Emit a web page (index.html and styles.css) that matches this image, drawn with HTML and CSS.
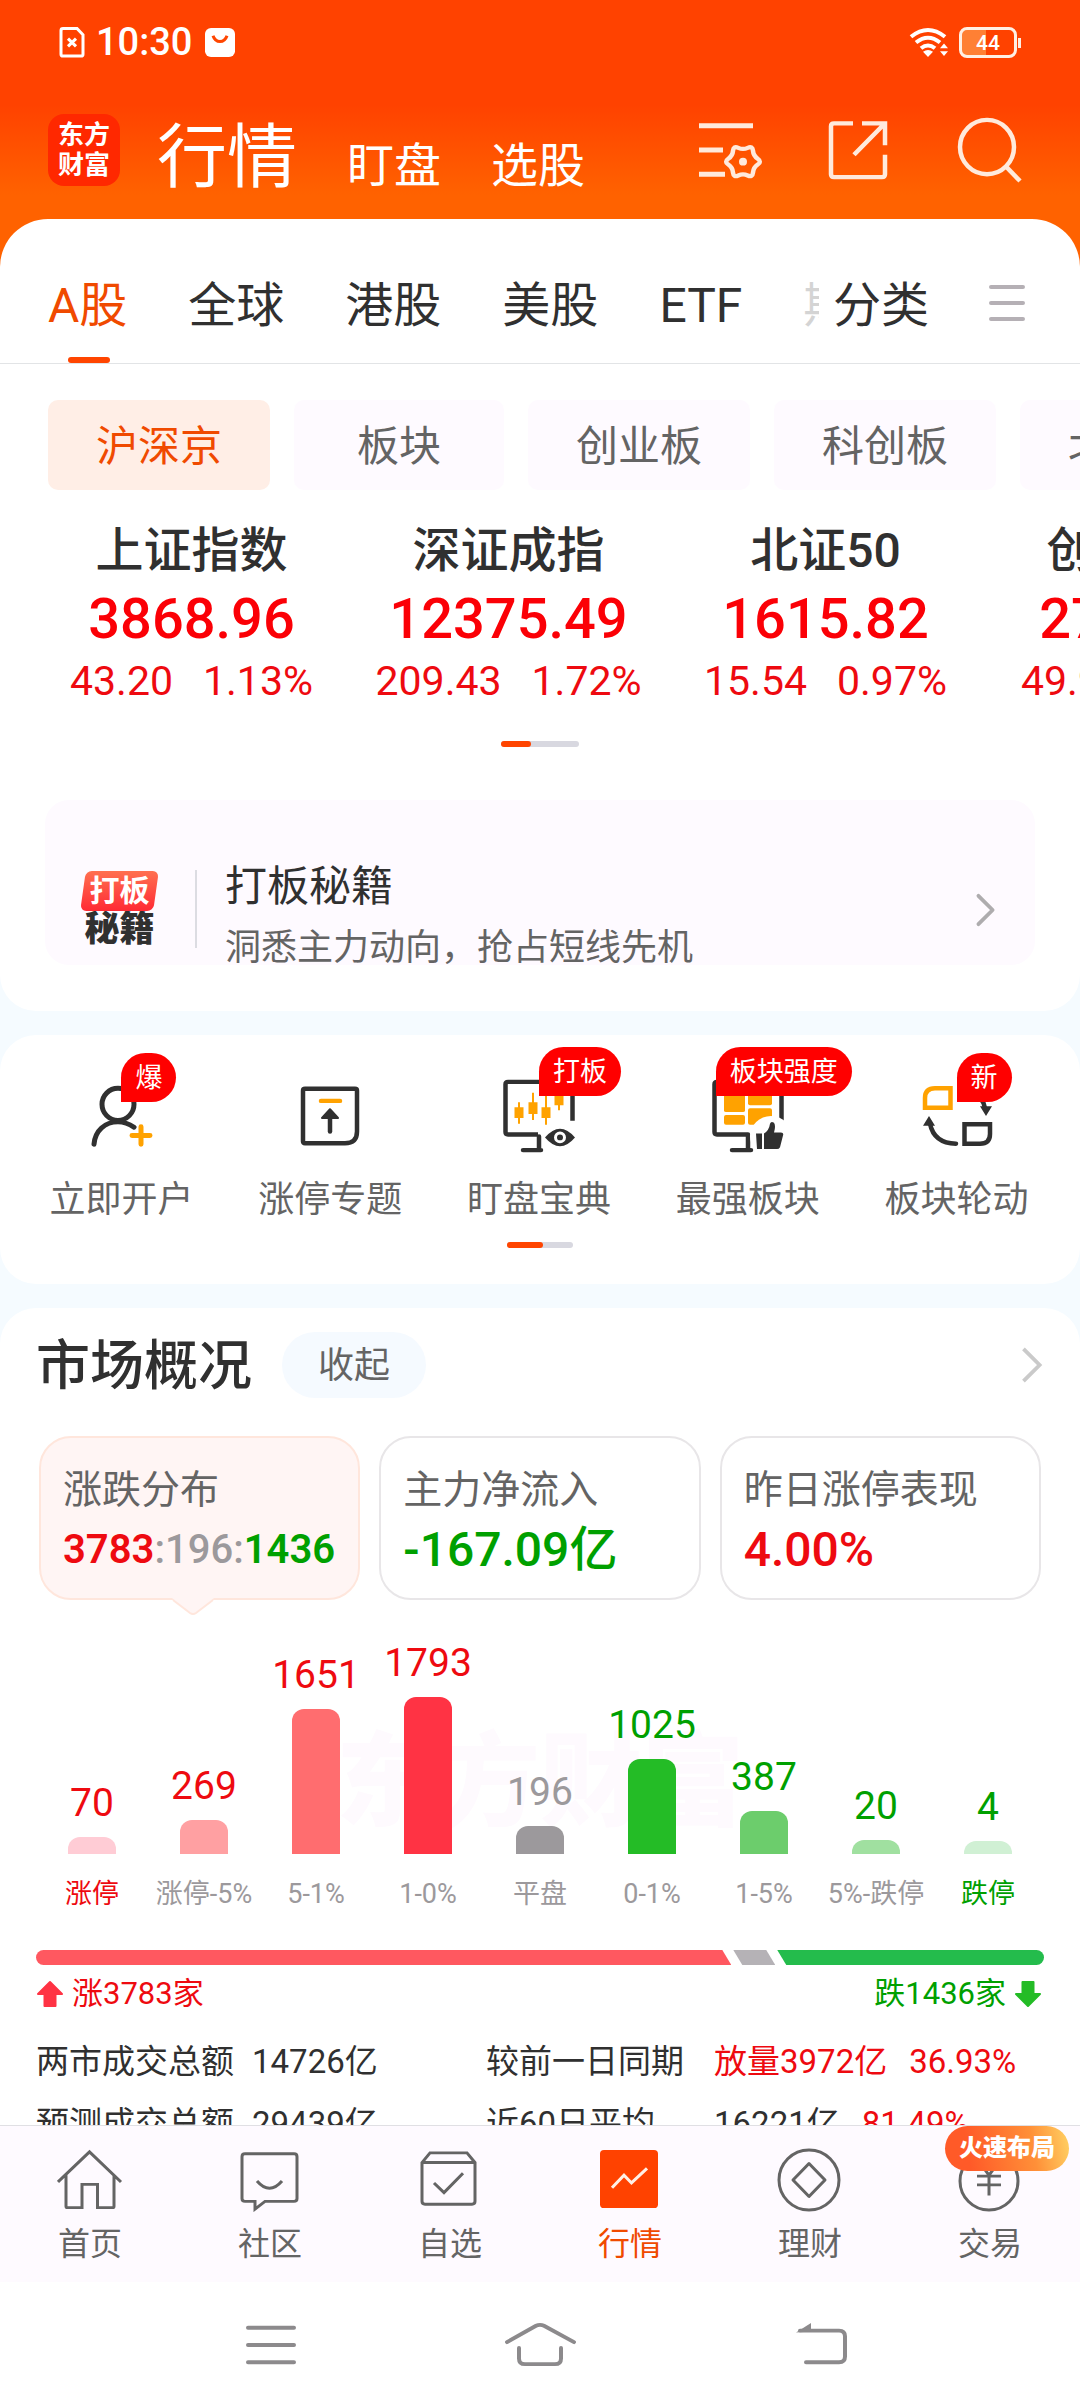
FILE: index.html
```html
<!DOCTYPE html>
<html lang="zh-CN">
<head>
<meta charset="utf-8">
<meta name="viewport" content="width=device-width, initial-scale=1">
<title>行情</title>
<link rel="stylesheet" href="styles.css">
</head>
<body>
<header class="top">
  <div class="status">
    <svg width="26" height="31" viewBox="0 0 26 32" preserveAspectRatio="none" fill="none" stroke="#fff" stroke-width="3"><path d="M4 1.500H18L24 8V28q0 2-2 2H4q-2 0-2-2V3.500q0-2 2-2z"/><path d="M9 12l8 8M17 12l-8 8"/></svg>
    <time class="clock">10:30</time>
    <svg width="30" height="31" viewBox="0 0 30 32" preserveAspectRatio="none"><rect y="1" width="30" height="30" rx="6" fill="#fff"/><path d="M8 9q2 6 7 6t7-6" fill="none" stroke="#ff4500" stroke-width="3"/></svg>
    <span class="spacer"></span>
    <svg width="40" height="31" viewBox="0 0 40 32" preserveAspectRatio="none" fill="none" stroke="#fff" stroke-width="4"><path d="M2 10Q19-4 36 10M7 16Q19 6 31 16M12 22Q19 16 26 22"/><path d="M14 25.500Q19 22 24 25.500L19 31z" fill="#fff" stroke="none"/><path d="M31 22l4-5 4 5zM31 25l4 5 4-5z" fill="#fff" stroke="none"/></svg>
    <span class="battery">44</span>
  </div>
  <div class="bar">
    <a class="logo" href="#">东方<br>财富</a>
    <nav class="modes">
      <a class="mode mode-on" href="#">行情</a>
      <a class="mode" href="#">盯盘</a>
      <a class="mode" href="#">选股</a>
    </nav>
    <div class="tools">
      <button type="button" aria-label="设置"><svg width="66" height="66" viewBox="0 0 66 68" preserveAspectRatio="none" fill="none" stroke="#ffeadc" stroke-width="5"><path d="M0 9H54M0 34H24M0 59H26"/><path stroke-width="4.500" d="M58.700 43Q63 46 58.700 49Q54.400 52 54 57.200Q53.500 62.500 48.700 60.200Q44 58 39.300 60.200Q34.500 62.500 34 57.200Q33.600 52 29.300 49Q25 46 29.300 43Q33.600 40 34 34.800Q34.500 29.500 39.300 31.800Q44 34 48.700 31.800Q53.500 29.500 54 34.800Q54.400 40 58.700 43z"/><circle cx="44" cy="46" r="4" fill="#ffeadc" stroke="none"/></svg></button>
      <button type="button" aria-label="分享"><svg width="66" height="66" viewBox="0 0 66 68" preserveAspectRatio="none" fill="none" stroke="#ffeadc" stroke-width="4.500"><path d="M25 6.500H6q-3 0-3 3V59q0 3 3 3H54q3 0 3-3V39M34 6.500H57V29M57 6.500L26 39"/></svg></button>
      <button type="button" aria-label="搜索"><svg width="66" height="66" viewBox="0 0 66 68" preserveAspectRatio="none" fill="none" stroke="#ffeadc" stroke-width="4.500"><ellipse cx="30" cy="31" rx="27" ry="28"/><path d="M48 50L63 66"/></svg></button>
    </div>
  </div>
</header>

<main class="main">
  <section class="sheet">
    <div class="tabs">
      <nav class="tab-list">
        <a class="tab tab-on" href="#">A股</a>
        <a class="tab" href="#">全球</a>
        <a class="tab" href="#">港股</a>
        <a class="tab" href="#">美股</a>
        <a class="tab" href="#">ETF</a>
        <a class="tab tab-fade" href="#">期</a>
      </nav>
      <a class="tab" href="#">分类</a>
      <button class="tab-menu" type="button" aria-label="菜单"><svg width="36" height="38" viewBox="0 0 36 38" stroke="#b5b0b5" stroke-width="4" stroke-linecap="round"><path d="M2 3H34M2 19H34M2 35H34"/></svg></button>
    </div>
    <nav class="chips">
      <a class="chip chip-on" href="#">沪深京</a>
      <a class="chip" href="#">板块</a>
      <a class="chip" href="#">创业板</a>
      <a class="chip" href="#">科创板</a>
      <a class="chip" href="#">北交所</a>
    </nav>
    <div class="indices">
      <a class="index" href="#"><span class="index-name">上证指数</span><span class="index-value">3868.96</span><span class="index-change"><span>43.20</span><span>1.13%</span></span></a>
      <a class="index" href="#"><span class="index-name">深证成指</span><span class="index-value">12375.49</span><span class="index-change"><span>209.43</span><span>1.72%</span></span></a>
      <a class="index" href="#"><span class="index-name">北证50</span><span class="index-value">1615.82</span><span class="index-change"><span>15.54</span><span>0.97%</span></span></a>
      <a class="index" href="#"><span class="index-name">创业板指</span><span class="index-value">2774.30</span><span class="index-change"><span>49.90</span><span>1.83%</span></span></a>
    </div>
    <div class="pager pager-wide"><span></span></div>
    <a class="promo" href="#">
      <span class="promo-logo"><span class="promo-tag">打板</span><span class="promo-word">秘籍</span></span>
      <span class="promo-text"><span class="promo-title">打板秘籍</span><span class="promo-sub">洞悉主力动向，抢占短线先机</span></span>
      <svg width="22" height="36" viewBox="0 0 22 38" fill="none" stroke="#aeacae" stroke-width="4" stroke-linecap="round" stroke-linejoin="round"><path d="M3 4L18 19L3 34"/></svg>
    </a>
  </section>

  <section class="card quick">
    <nav class="quick-list">
      <a class="quick-item" href="#">
        <span class="quick-icon"><svg width="72" height="74" viewBox="0 0 72 76" preserveAspectRatio="none" fill="none" stroke="#303030" stroke-width="5" stroke-linecap="round"><ellipse cx="33" cy="26" rx="16" ry="16.500"/><path d="M9 67C10 53 20 44 33 44C39 44 44 46 49 49.500"/><path stroke="#ffa200" d="M47 58H65M56 49V67"/></svg><span class="badge badge-low">爆</span></span>
        立即开户
      </a>
      <a class="quick-item" href="#">
        <span class="quick-icon"><svg width="72" height="74" viewBox="0 0 72 76" preserveAspectRatio="none" fill="none" stroke="#303030" stroke-width="4.500" stroke-linecap="round"><path d="M11 10H61q2 0 2 2V54q0 12-12 12H11q-2 0-2-2V12q0-2 2-2z"/><path stroke="#ffa200" d="M27 22.500H46"/><path d="M36 38V54"/><path fill="#303030" stroke-width="2" stroke-linejoin="round" d="M36 31L44 40H28z"/></svg></span>
        涨停专题
      </a>
      <a class="quick-item" href="#">
        <span class="quick-icon"><svg width="72" height="74" viewBox="0 0 72 76" preserveAspectRatio="none" fill="none" stroke="#303030" stroke-width="4.500" stroke-linecap="round"><path stroke-linecap="butt" d="M35 57H5q-2.500 0-2.500-2.500V5.500Q2.500 3 5 3H67q2.500 0 2.500 2.500V43"/><path d="M36 59V72M20 73H38"/><g stroke="#ffa200" stroke-width="2" stroke-linecap="butt"><path d="M16 24V46M30 14V42M43 14V47M56 8V32"/><path stroke-width="9" d="M16 29V40M30 24V36M43 29V40M56 14V27"/></g><path fill="#303030" stroke="none" d="M42 60Q57 42 72 60Q57 78 42 60z"/><circle cx="57" cy="60" r="4.500" stroke="#fff" stroke-width="3"/></svg><span class="badge">打板</span></span>
        盯盘宝典
      </a>
      <a class="quick-item" href="#">
        <span class="quick-icon"><svg width="72" height="74" viewBox="0 0 72 76" preserveAspectRatio="none" fill="none" stroke="#303030" stroke-width="4.500" stroke-linecap="round"><path d="M36 57H5q-2.500 0-2.500-2.500V5.500Q2.500 3 5 3H67q2.500 0 2.500 2.500V42M36 59V72M20 73H39"/><g fill="#ffa200" stroke="none"><rect x="12" y="12" width="21" height="22" rx="2"/><rect x="12" y="37" width="21" height="10" rx="2"/><rect x="36" y="12" width="24" height="15" rx="2"/><rect x="36" y="30" width="24" height="17" rx="2"/></g><circle cx="59" cy="59" r="21" fill="#fff" stroke="none"/><path fill="#303030" stroke="none" d="M44 56h6v16h-5zM52 56Q57 53 58 46Q59 43 62 45Q64 48 62 55H69Q72 55 71 58L68 70Q67 72 65 72H52z"/></svg><span class="badge badge-wide">板块强度</span></span>
        最强板块
      </a>
      <a class="quick-item" href="#">
        <span class="quick-icon"><svg width="72" height="74" viewBox="0 0 72 76" preserveAspectRatio="none" fill="none" stroke="#303030" stroke-width="4.500"><path stroke="#ffa200" d="M14 9.500H29.500V29.500H4V19.500Q4 9.500 14 9.500z"/><path d="M43.500 46.500H69V56.500Q69 66.500 59 66.500H43.500z"/><path stroke-linecap="round" d="M9 46Q13 66 35 66.500"/><path fill="#303030" stroke="none" d="M8 38L14 48H2zM65 38L71 28H59z"/><path d="M64 30Q62 18 50 12"/></svg><span class="badge badge-low">新</span></span>
        板块轮动
      </a>
    </nav>
    <div class="pager"><span></span></div>
  </section>

  <section class="card market">
    <div class="market-head">
      <h2>市场概况</h2>
      <button class="fold" type="button">收起</button>
      <a class="more" href="#" aria-label="更多"><svg width="24" height="38" viewBox="0 0 24 40" fill="none" stroke="#cacaca" stroke-width="4"><path d="M3 3L20 20L3 37"/></svg></a>
    </div>
    <div class="stats">
      <button class="stat stat-on" type="button">
        <span class="stat-name">涨跌分布</span>
        <span class="stat-value stat-mix"><b class="up">3783</b><span class="flat">:196:</span><b class="down">1436</b></span>
        <svg class="pointer" width="42" height="18" viewBox="0 0 42 18"><path d="M0 0H42L24 15Q21 17 18 15z" fill="#fff5f4"/><path d="M1 2L18 15Q21 17 24 15L41 2" fill="none" stroke="#ffe6dc" stroke-width="2"/></svg>
      </button>
      <button class="stat" type="button"><span class="stat-name">主力净流入</span><span class="stat-value down">-167.09亿</span></button>
      <button class="stat" type="button"><span class="stat-name">昨日涨停表现</span><span class="stat-value up">4.00%</span></button>
    </div>
    <div class="chart">
      <span class="watermark">东方财富</span>
      <ul class="bars">
        <li class="up"><span>70</span><i class="b1" style="height:17px"></i></li>
        <li class="up"><span>269</span><i class="b2" style="height:34px"></i></li>
        <li class="up"><span>1651</span><i class="b3" style="height:145px"></i></li>
        <li class="up"><span>1793</span><i class="b4" style="height:157px"></i></li>
        <li class="flat"><span>196</span><i class="b5" style="height:28px"></i></li>
        <li class="down"><span>1025</span><i class="b6" style="height:95px"></i></li>
        <li class="down"><span>387</span><i class="b7" style="height:43px"></i></li>
        <li class="down"><span>20</span><i class="b8" style="height:14px"></i></li>
        <li class="down"><span>4</span><i class="b9" style="height:13px"></i></li>
      </ul>
      <ul class="ranges">
        <li class="up">涨停</li><li>涨停-5%</li><li>5-1%</li><li>1-0%</li><li>平盘</li><li>0-1%</li><li>1-5%</li><li>5%-跌停</li><li class="down">跌停</li>
      </ul>
    </div>
    <div class="ratio"><i class="ratio-up" style="flex-grow:696"></i><i class="ratio-flat" style="flex-grow:42"></i><i class="ratio-down" style="flex-grow:267"></i></div>
    <div class="totals">
      <span class="total up"><svg width="28" height="28" viewBox="0 0 28 28"><path fill="#ff3344" stroke="#ff3344" stroke-width="2" stroke-linejoin="round" d="M14 2L26 14H19.500V26H8.500V14H2z"/></svg>涨3783家</span>
      <span class="total down">跌1436家<svg width="28" height="28" viewBox="0 0 28 28"><path fill="#24bc26" stroke="#24bc26" stroke-width="2" stroke-linejoin="round" d="M14 26L26 14H19.500V2H8.500V14H2z"/></svg></span>
    </div>
    <table class="figures">
      <tr><th scope="row">两市成交总额</th><td>14726亿</td><th scope="row">较前一日同期</th><td><span class="pair"><span class="up">放量3972亿</span><span class="up">36.93%</span></span></td></tr>
      <tr><th scope="row">预测成交总额</th><td>29439亿</td><th scope="row">近60日平均</th><td><span class="pair"><span>16221亿</span><span class="up">81.49%</span></span></td></tr>
    </table>
  </section>
</main>

<nav class="dock">
  <a class="dock-item" href="#"><svg width="66" height="64" viewBox="0 0 66 66" preserveAspectRatio="none" fill="none" stroke="#646464" stroke-width="3"><path d="M1 35L32.500 4L64 35M9 28V60q0 1.500 1.500 1.500H25V37.500H40.500V61.500H55.500q1.500 0 1.500-1.500V28"/></svg>首页</a>
  <a class="dock-item" href="#"><svg width="66" height="64" viewBox="0 0 66 66" preserveAspectRatio="none" fill="none" stroke="#646464" stroke-width="3"><path d="M8 6H57q3 0 3 3V52q0 3-3 3H28L18 63V55H8q-3 0-3-3V9q0-3 3-3z"/><path d="M20 34Q32.500 49 45 34"/></svg>社区</a>
  <a class="dock-item" href="#"><svg width="66" height="64" viewBox="0 0 66 66" preserveAspectRatio="none" fill="none" stroke="#646464" stroke-width="3"><path d="M5 15L13 5H50L58 15V55q0 3-3 3H8q-3 0-3-3zM5 15H58M17 36L27 46L46 26"/></svg>自选</a>
  <a class="dock-item dock-on" href="#"><svg width="66" height="64" viewBox="0 0 66 66" preserveAspectRatio="none" fill="none"><rect x="3" y="2" width="58" height="60" rx="4" fill="#ff4200"/><path d="M15 41L27 28L34.500 36L50 21" stroke="#fff0e6" stroke-width="3"/></svg>行情</a>
  <a class="dock-item" href="#"><svg width="66" height="64" viewBox="0 0 66 66" preserveAspectRatio="none" fill="none" stroke="#646464" stroke-width="3"><ellipse cx="32" cy="33" rx="30" ry="31"/><path stroke-linejoin="round" d="M32 16L48 33L32 50L16 33z"/></svg>理财</a>
  <a class="dock-item" href="#"><svg width="66" height="64" viewBox="0 0 66 66" preserveAspectRatio="none" fill="none" stroke="#646464" stroke-width="3"><ellipse cx="32" cy="34" rx="29" ry="30"/><path d="M22 14L32 28L42 14M20 29H44M20 38H44M32 28V49"/></svg>交易<span class="dock-badge">火速布局</span></a>
</nav>

<div class="system">
  <button type="button" aria-label="最近任务"><svg width="80" height="48" viewBox="0 0 80 50" preserveAspectRatio="none" stroke="#8c8a8c" stroke-width="4" stroke-linecap="round"><path d="M17 7H63M17 25H63M17 43H63"/></svg></button>
  <button type="button" aria-label="主屏幕"><svg width="80" height="48" viewBox="0 0 80 50" preserveAspectRatio="none" fill="none" stroke="#8c8a8c" stroke-width="4" stroke-linecap="round"><path d="M7 22L36 5Q40 3 44 5L74 22M19 28V39q0 6 6 6H55q6 0 6-6V28"/></svg></button>
  <button type="button" aria-label="返回"><svg width="80" height="48" viewBox="0 0 80 50" preserveAspectRatio="none" fill="none" stroke="#8c8a8c" stroke-width="4" stroke-linecap="round"><path d="M31 10H70q6 0 6 6V37q0 6-6 6H37"/><path d="M27 12L42 2V11z" fill="#8c8a8c" stroke="none"/></svg></button>
</div>
</body>
</html>
```
FILE: styles.css
```css
* { box-sizing: border-box; }

body {
  margin: 0;
  height: 100vh;
  display: flex;
  flex-direction: column;
  overflow: hidden;
  background: #f5fbff;
  color: #303030;
  font-family: Roboto, "Noto Sans CJK SC", sans-serif;
}

a { color: inherit; text-decoration: none; }
button { margin: 0; padding: 0; border: 0; background: none; font: inherit; color: inherit; }
svg { display: block; flex: none; }
ul { margin: 0; padding: 0; list-style: none; }
i { display: block; }

.up { color: #ee0a10; }
.down { color: #00a000; }
.flat { color: #9c999c; }

/* header */
.top {
  flex: none;
  padding-bottom: 50px;
  background: linear-gradient(#ff4200 105px, #ff6200 195px);
  color: #fff;
}
.status {
  display: flex;
  align-items: center;
  height: 84px;
  padding: 0 63px 0 59px;
}
.clock { margin: 0 13px 0 11px; font-size: 38px; font-weight: 500; line-height: 48px; }
.spacer { flex: 1; }
.battery {
  position: relative;
  width: 58px;
  height: 31px;
  margin-left: 10px;
  border: 3px solid #fff0e4;
  border-radius: 8px;
  background: linear-gradient(90deg, #ff8034 24px, transparent 24px);
  font-size: 21px;
  font-weight: 500;
  line-height: 26px;
  text-align: center;
}
.battery::after {
  content: "";
  position: absolute;
  top: 8px;
  right: -7px;
  width: 3px;
  height: 10px;
  background: #fff0e4;
}
.bar {
  display: flex;
  align-items: center;
  height: 135px;
  padding: 0 57px 3px 48px;
}
.logo {
  width: 72px;
  height: 72px;
  padding-top: 6px;
  border-radius: 16px;
  background: #ff2800;
  font-size: 26px;
  font-weight: 700;
  line-height: 30px;
  text-align: center;
}
.modes { display: flex; align-items: baseline; gap: 50px; margin-left: 37px; padding-top: 24px; }
.mode { font-size: 47px; line-height: 88px; }
.mode-on { font-size: 70px; }
.tools { display: flex; gap: 63px; margin-left: auto; }

/* sheet */
.main {
  flex: 1;
  min-height: 0;
  margin-top: -50px;
  overflow: hidden;
}
.sheet { padding-bottom: 46px; border-radius: 48px 48px 36px 36px; background: #fff; }
.tabs {
  display: flex;
  height: 145px;
  padding: 0 55px 0 48px;
  border-bottom: 1px solid #e2e4e6;
}
.tab-list { display: flex; flex: 1; gap: 61px; min-width: 0; margin-right: 14px; overflow: hidden; }
.tab { position: relative; flex: none; font-size: 48px; line-height: 174px; height: 144px; }
.tab-on { color: #f04a00; }
.tab-on::after {
  content: "";
  position: absolute;
  left: 20px;
  bottom: 0;
  width: 42px;
  height: 6px;
  border-radius: 3px;
  background: #ff4500;
}
.tab-fade { opacity: 0.2; }
.tab-menu { margin: 24px 0 0 60px; }

.chips { display: flex; gap: 24px; margin-top: 36px; padding-left: 48px; overflow: hidden; }
.chip {
  flex: none;
  min-width: 210px;
  height: 90px;
  padding: 0 48px;
  border-radius: 10px;
  background: #fefaff;
  color: #646464;
  font-size: 42px;
  line-height: 94px;
  text-align: center;
}
.chip-on { background: #ffeee6; color: #f04a00; }

.indices { display: flex; padding: 31px 0 0 33px; overflow: hidden; }
.index { flex: none; width: 317px; display: flex; flex-direction: column; text-align: center; }
.index-name { font-size: 48px; font-weight: 500; line-height: 60px; }
.index-value { color: #fb0006; font-size: 56px; font-weight: 500; line-height: 76px; }
.index-change { display: flex; justify-content: center; gap: 30px; color: #ee0a10; font-size: 41px; line-height: 48px; }

.pager { width: 66px; height: 6px; margin: 18px auto 0; border-radius: 3px; background: #d8d8e0; }
.pager span { display: block; width: 36px; height: 6px; border-radius: 3px; background: #ff4500; }
.pager-wide { width: 78px; margin-top: 36px; }
.pager-wide span { width: 30px; }

.promo {
  display: flex;
  align-items: center;
  height: 165px;
  margin: 53px 45px 0;
  padding: 55px 38px 0 35px;
  border-radius: 24px;
  background: #fefaff;
}
.promo-logo { display: flex; flex-direction: column; width: 79px; }
.promo-tag {
  position: relative;
  z-index: 0;
  color: #fff;
  font-size: 30px;
  font-weight: 700;
  line-height: 40px;
  text-align: center;
}
.promo-tag::before {
  content: "";
  position: absolute;
  z-index: -1;
  inset: 0 3px;
  border-radius: 6px;
  background: linear-gradient(#ff7050, #ff2a34);
  transform: skewX(-8deg);
}
.promo-word { font-size: 35px; font-weight: 900; line-height: 38px; text-align: center; }
.promo-text {
  display: flex;
  flex: 1;
  flex-direction: column;
  margin-left: 36px;
  position: relative;
  padding: 15px 0 0 30px;
}
.promo-text::before {
  content: "";
  position: absolute;
  left: 0;
  top: 28px;
  width: 2px;
  height: 78px;
  background: #dcdce2;
}
.promo-title { font-size: 42px; line-height: 60px; }
.promo-sub { color: #646464; font-size: 36px; line-height: 62px; }

/* cards */
.card { margin-top: 24px; border-radius: 36px; background: #fff; }
.quick { padding: 44px 0 36px; }
.quick-list { display: grid; grid-template-columns: repeat(5, 1fr); padding: 0 19px 0 17px; }
.quick-item {
  display: flex;
  flex-direction: column;
  align-items: center;
  gap: 23px;
  color: #646464;
  font-size: 36px;
  line-height: 48px;
}
.quick-icon { position: relative; }
.quick-icon svg { overflow: visible; }
.badge {
  position: absolute;
  left: 36px;
  top: -32px;
  height: 49px;
  padding: 0 14px;
  border-radius: 25px 25px 25px 0;
  background: #ff0000;
  color: #fff;
  font-size: 27px;
  line-height: 51px;
  white-space: nowrap;
}
.badge-low { top: -26px; }
.badge-wide { left: 4px; }

.market { padding: 24px 36px 0; border-radius: 36px 36px 0 0; }
.market-head { display: flex; align-items: center; height: 66px; }
h2 { margin: 0; padding-top: 4px; font-size: 54px; font-weight: 500; line-height: 66px; }
.fold {
  height: 66px;
  margin-left: 30px;
  padding: 2px 36px 0;
  border-radius: 33px;
  background: #f5faff;
  color: #646464;
  font-size: 36px;
  line-height: 64px;
}
.more { margin-left: auto; }

.stats { display: grid; grid-template-columns: repeat(3, 1fr); gap: 19px; margin: 38px 3px 0; }
.stat {
  position: relative;
  display: flex;
  flex-direction: column;
  padding: 23px 0 17px 22px;
  border: 2px solid #e8e6e8;
  border-radius: 32px;
  background: #fff;
  text-align: left;
}
.stat-on { border-color: #ffe6dc; background: #fff5f4; }
.stat-name { color: #646464; font-size: 39px; line-height: 58px; }
.stat-value { font-size: 48px; font-weight: 500; line-height: 62px; }
.stat-mix { font-size: 40px; }
.stat-mix b { font-weight: 600; }
.pointer { position: absolute; left: 131px; top: 160px; }

.chart { position: relative; z-index: 0; margin-top: 37px; }
.watermark {
  position: absolute;
  z-index: -1;
  inset: 80px 0 auto 0;
  color: #fefafe;
  font-size: 102px;
  font-weight: 900;
  line-height: 132px;
  text-align: center;
}
.bars, .ranges { display: grid; grid-template-columns: repeat(9, 1fr); }
.bars { height: 217px; align-items: end; }
.bars li {
  display: flex;
  flex-direction: column;
  align-items: center;
  gap: 10px;
  font-size: 39px;
  line-height: 48px;
}
.bars i { width: 48px; border-radius: 12px 12px 0 0; }
.b1 { background: #ffccd5; }
.b2 { background: #ffa0a2; }
.b3 { background: #ff6d6f; }
.b4 { background: #ff3344; }
.b5 { background: #9c999c; }
.b6 { background: #24bc26; }
.b7 { background: #6ccd6c; }
.b8 { background: #a0e0a0; }
.b9 { background: #d0f0d4; }
.ranges { margin-top: 20px; color: #9c999c; font-size: 27px; line-height: 40px; text-align: center; }
.ranges .up { color: #ee0a10; }
.ranges .down { color: #00a000; }

.ratio { display: flex; gap: 2px; height: 15px; margin-top: 36px; border-radius: 8px; overflow: hidden; }
.ratio-up { background: #ff5860; clip-path: polygon(0 0, calc(100% - 9px) 0, 100% 100%, 0 100%); }
.ratio-flat { background: #b5b2b6; clip-path: polygon(0 0, calc(100% - 9px) 0, 100% 100%, 9px 100%); }
.ratio-down { background: #24bc4c; clip-path: polygon(0 0, 100% 0, 100% 100%, 9px 100%); }
.totals { display: flex; justify-content: space-between; margin-top: 9px; padding-right: 2px; }
.total { display: flex; align-items: center; gap: 8px; font-size: 31px; line-height: 40px; }

.figures { margin-top: 17px; width: 100%; border-collapse: collapse; table-layout: fixed; font-size: 33px; line-height: 62px; }
.figures th, .figures td { padding: 0; font-weight: 400; text-align: left; white-space: nowrap; }
.figures th:first-child { width: 216px; }
.figures td:nth-child(2) { width: 234px; }
.figures th:nth-child(3) { width: 228px; }
.pair { display: flex; gap: 22px; }

/* bottom navigation */
.dock {
  position: relative;
  flex: none;
  display: grid;
  grid-template-columns: repeat(6, 1fr);
  border-top: 1px solid #e0e0e4;
  background: #fefaff;
}
.dock-item {
  position: relative;
  display: flex;
  flex-direction: column;
  align-items: center;
  gap: 10px;
  padding: 22px 0 16px;
  color: #646464;
  font-size: 32px;
  line-height: 44px;
}
.dock-on { color: #f04a00; }
.dock-badge {
  position: absolute;
  left: 45px;
  top: 0;
  padding: 0 14px;
  border-radius: 23px;
  background: linear-gradient(80deg, #ff5a28 20%, #ff9038 70%, #ffd264);
  color: #fff;
  font-size: 24px;
  font-weight: 900;
  line-height: 45px;
  white-space: nowrap;
}

.system {
  flex: none;
  display: grid;
  grid-template-columns: repeat(3, 1fr);
  justify-items: center;
  height: 126px;
  padding: 39px 136px 0;
  background: #fff;
}
.system button { height: 48px; }
```
